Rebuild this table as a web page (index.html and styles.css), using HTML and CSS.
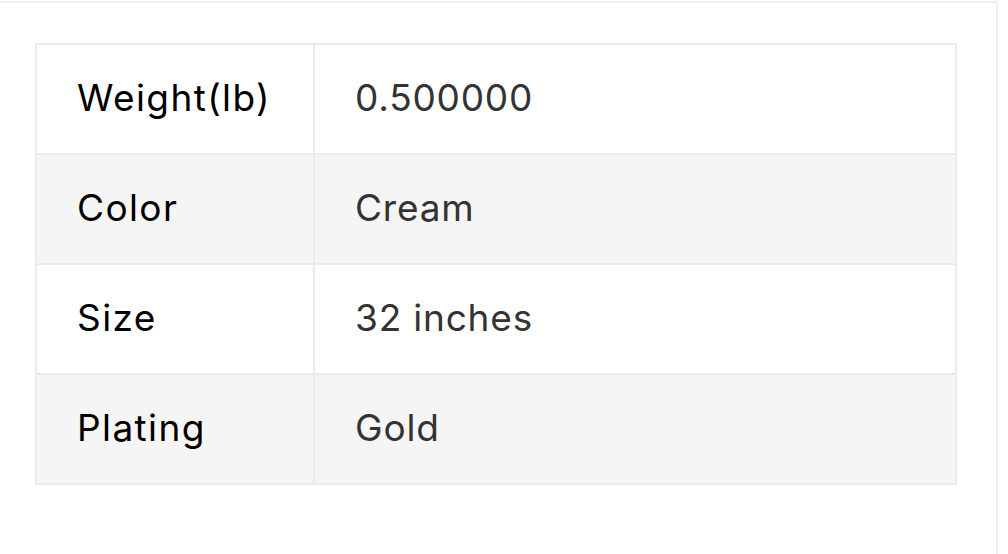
FILE: index.html
```html
<!DOCTYPE html>
<html>
<head>
<meta charset="utf-8">
<link rel="stylesheet" href="styles.css">
</head>
<body>
<div class="panel">
  <table class="specs">
    <tr><td class="label">Weight(lb)</td><td class="value">0.500000</td></tr>
    <tr class="alt"><td class="label">Color</td><td class="value">Cream</td></tr>
    <tr><td class="label">Size</td><td class="value">32 inches</td></tr>
    <tr class="alt"><td class="label">Plating</td><td class="value">Gold</td></tr>
  </table>
</div>
</body>
</html>
```
FILE: styles.css
```css
html, body {
  margin: 0;
  padding: 0;
  background: #fff;
  overflow: hidden;
}
.panel {
  box-sizing: border-box;
  margin: 1px 0 0 -2px;
  width: 1000px;
  height: 553px;
  border: 2px solid #efefef;
  border-bottom: none;
  padding: 40px 39px 0 35px;
}
.specs {
  width: 922px;
  border-collapse: collapse;
  font-family: Inter, "Open Sans", sans-serif;
  font-size: 37px;
  letter-spacing: 1.4px;
}
.specs td {
  border: 2px solid #ebebeb;
  height: 110px;
  padding: 0 0 4px 40px;
  box-sizing: border-box;
  vertical-align: middle;
}
.specs .label {
  width: 278px;
  color: #000;
}
.specs .value {
  color: #333;
  letter-spacing: 0.8px;
}
.specs .alt td {
  background: #f5f5f5;
}
```
